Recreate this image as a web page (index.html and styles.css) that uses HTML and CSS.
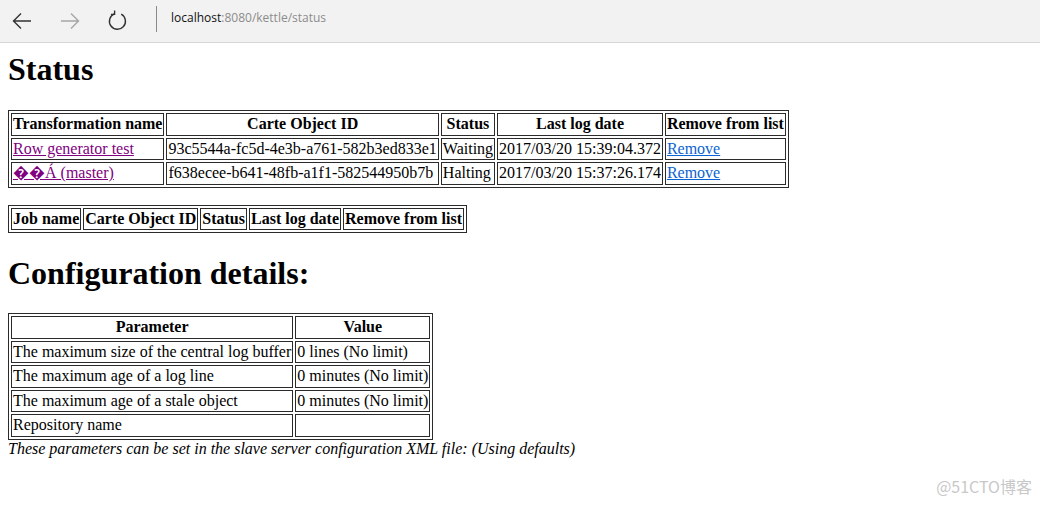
FILE: index.html
```html
<!DOCTYPE html>
<html lang="en">
<head>
    <meta charset="UTF-8">
    <title>Kettle slave server status</title>
    <link rel="stylesheet" href="styles.css">
</head>
<body>
<div class="barra">
    <span class="icono">
        <svg width="24" height="24" viewBox="0 0 24 24"><path d="M21 12H3.5M11 4.5L3.5 12L11 19.5" fill="none" stroke="#333" stroke-width="1.4"/></svg>
    </span>
    <span class="icono">
        <svg width="24" height="24" viewBox="0 0 24 24"><path d="M3 12H20.5M13 4.5L20.5 12L13 19.5" fill="none" stroke="#a6a6a6" stroke-width="1.4"/></svg>
    </span>
    <span class="icono">
        <svg width="24" height="24" viewBox="0 0 24 24"><path d="M15.2 5.2A8 8 0 1 1 8.3 4.9" fill="none" stroke="#333" stroke-width="1.4"/><path d="M8.6 1.6L8.6 5.4L4.9 5.4" fill="none" stroke="#333" stroke-width="1.4"/></svg>
    </span>
    <span class="separador"></span>
    <span class="url">localhost<span class="gris">:8080/kettle/status</span></span>
</div>

<div class="pagina">
    <h1 class="primero">Status</h1>
    <table>
        <tr>
            <th>Transformation name</th>
            <th>Carte Object ID</th>
            <th>Status</th>
            <th>Last log date</th>
            <th>Remove from list</th>
        </tr>
        <tr>
            <td><a class="visto" href="#">Row generator test</a></td>
            <td>93c5544a-fc5d-4e3b-a761-582b3ed833e1</td>
            <td>Waiting</td>
            <td>2017/03/20 15:39:04.372</td>
            <td><a href="#">Remove</a></td>
        </tr>
        <tr>
            <td><a class="visto" href="#">&#xFFFD;&#xFFFD;Á (master)</a></td>
            <td>f638ecee-b641-48fb-a1f1-582544950b7b</td>
            <td>Halting</td>
            <td>2017/03/20 15:37:26.174</td>
            <td><a href="#">Remove</a></td>
        </tr>
    </table>
    <p></p>
    <table>
        <tr>
            <th>Job name</th>
            <th>Carte Object ID</th>
            <th>Status</th>
            <th>Last log date</th>
            <th>Remove from list</th>
        </tr>
    </table>
    <p></p>
    <h1 class="config">Configuration details:</h1>
    <table>
        <tr>
            <th>Parameter</th>
            <th>Value</th>
        </tr>
        <tr>
            <td>The maximum size of the central log buffer</td>
            <td>0 lines (No limit)</td>
        </tr>
        <tr>
            <td>The maximum age of a log line</td>
            <td>0 minutes (No limit)</td>
        </tr>
        <tr>
            <td>The maximum age of a stale object</td>
            <td>0 minutes (No limit)</td>
        </tr>
        <tr>
            <td>Repository name</td>
            <td></td>
        </tr>
    </table>
    <i class="nota">These parameters can be set in the slave server configuration XML file: (Using defaults)</i>
</div>

<div class="marca">@51CTO博客</div>
</body>
</html>
```

FILE: styles.css
```css
body {
    margin: 0;
    font-family: "Liberation Serif", "Times New Roman", serif;
    font-size: 16px;
    color: #000;
    background: #fff;
}
.barra {
    height: 42px;
    background-color: #f2f2f2;
    border-bottom: 1px solid #d6d6d6;
    display: flex;
    align-items: center;
    padding-left: 10px;
}
.icono {
    width: 24px;
    height: 24px;
    margin-right: 24px;
}
.icono svg {
    display: block;
}
.separador {
    width: 1px;
    height: 26px;
    background-color: #8a8a8a;
    margin-left: 2px;
    margin-right: 14px;
    margin-top: -4px;
}
.url {
    font-family: "Open Sans", "Noto Sans", sans-serif;
    font-size: 12px;
    color: #111;
    margin-top: -8px;
}
.gris {
    color: #8c8c8c;
}
.pagina {
    padding: 8px;
}
h1 {
    font-size: 32px;
    margin: 22px 0;
}
h1.primero {
    margin-top: 0;
}
h1.config {
    margin-bottom: 21px;
}
p {
    margin: 17px 0;
}
table {
    border: 1px solid #2b2b2b;
    border-spacing: 2px;
}
th, td {
    border: 1px solid #2b2b2b;
    padding: 1px;
    line-height: 18.5px;
}
.nota {
    display: block;
}
a {
    color: #0a63d0;
}
a.visto {
    color: #800080;
}
.marca {
    position: absolute;
    right: 8px;
    bottom: 9px;
    font-family: "Noto Sans CJK SC", sans-serif;
    font-size: 16px;
    color: #c8c8c8;
}
```
